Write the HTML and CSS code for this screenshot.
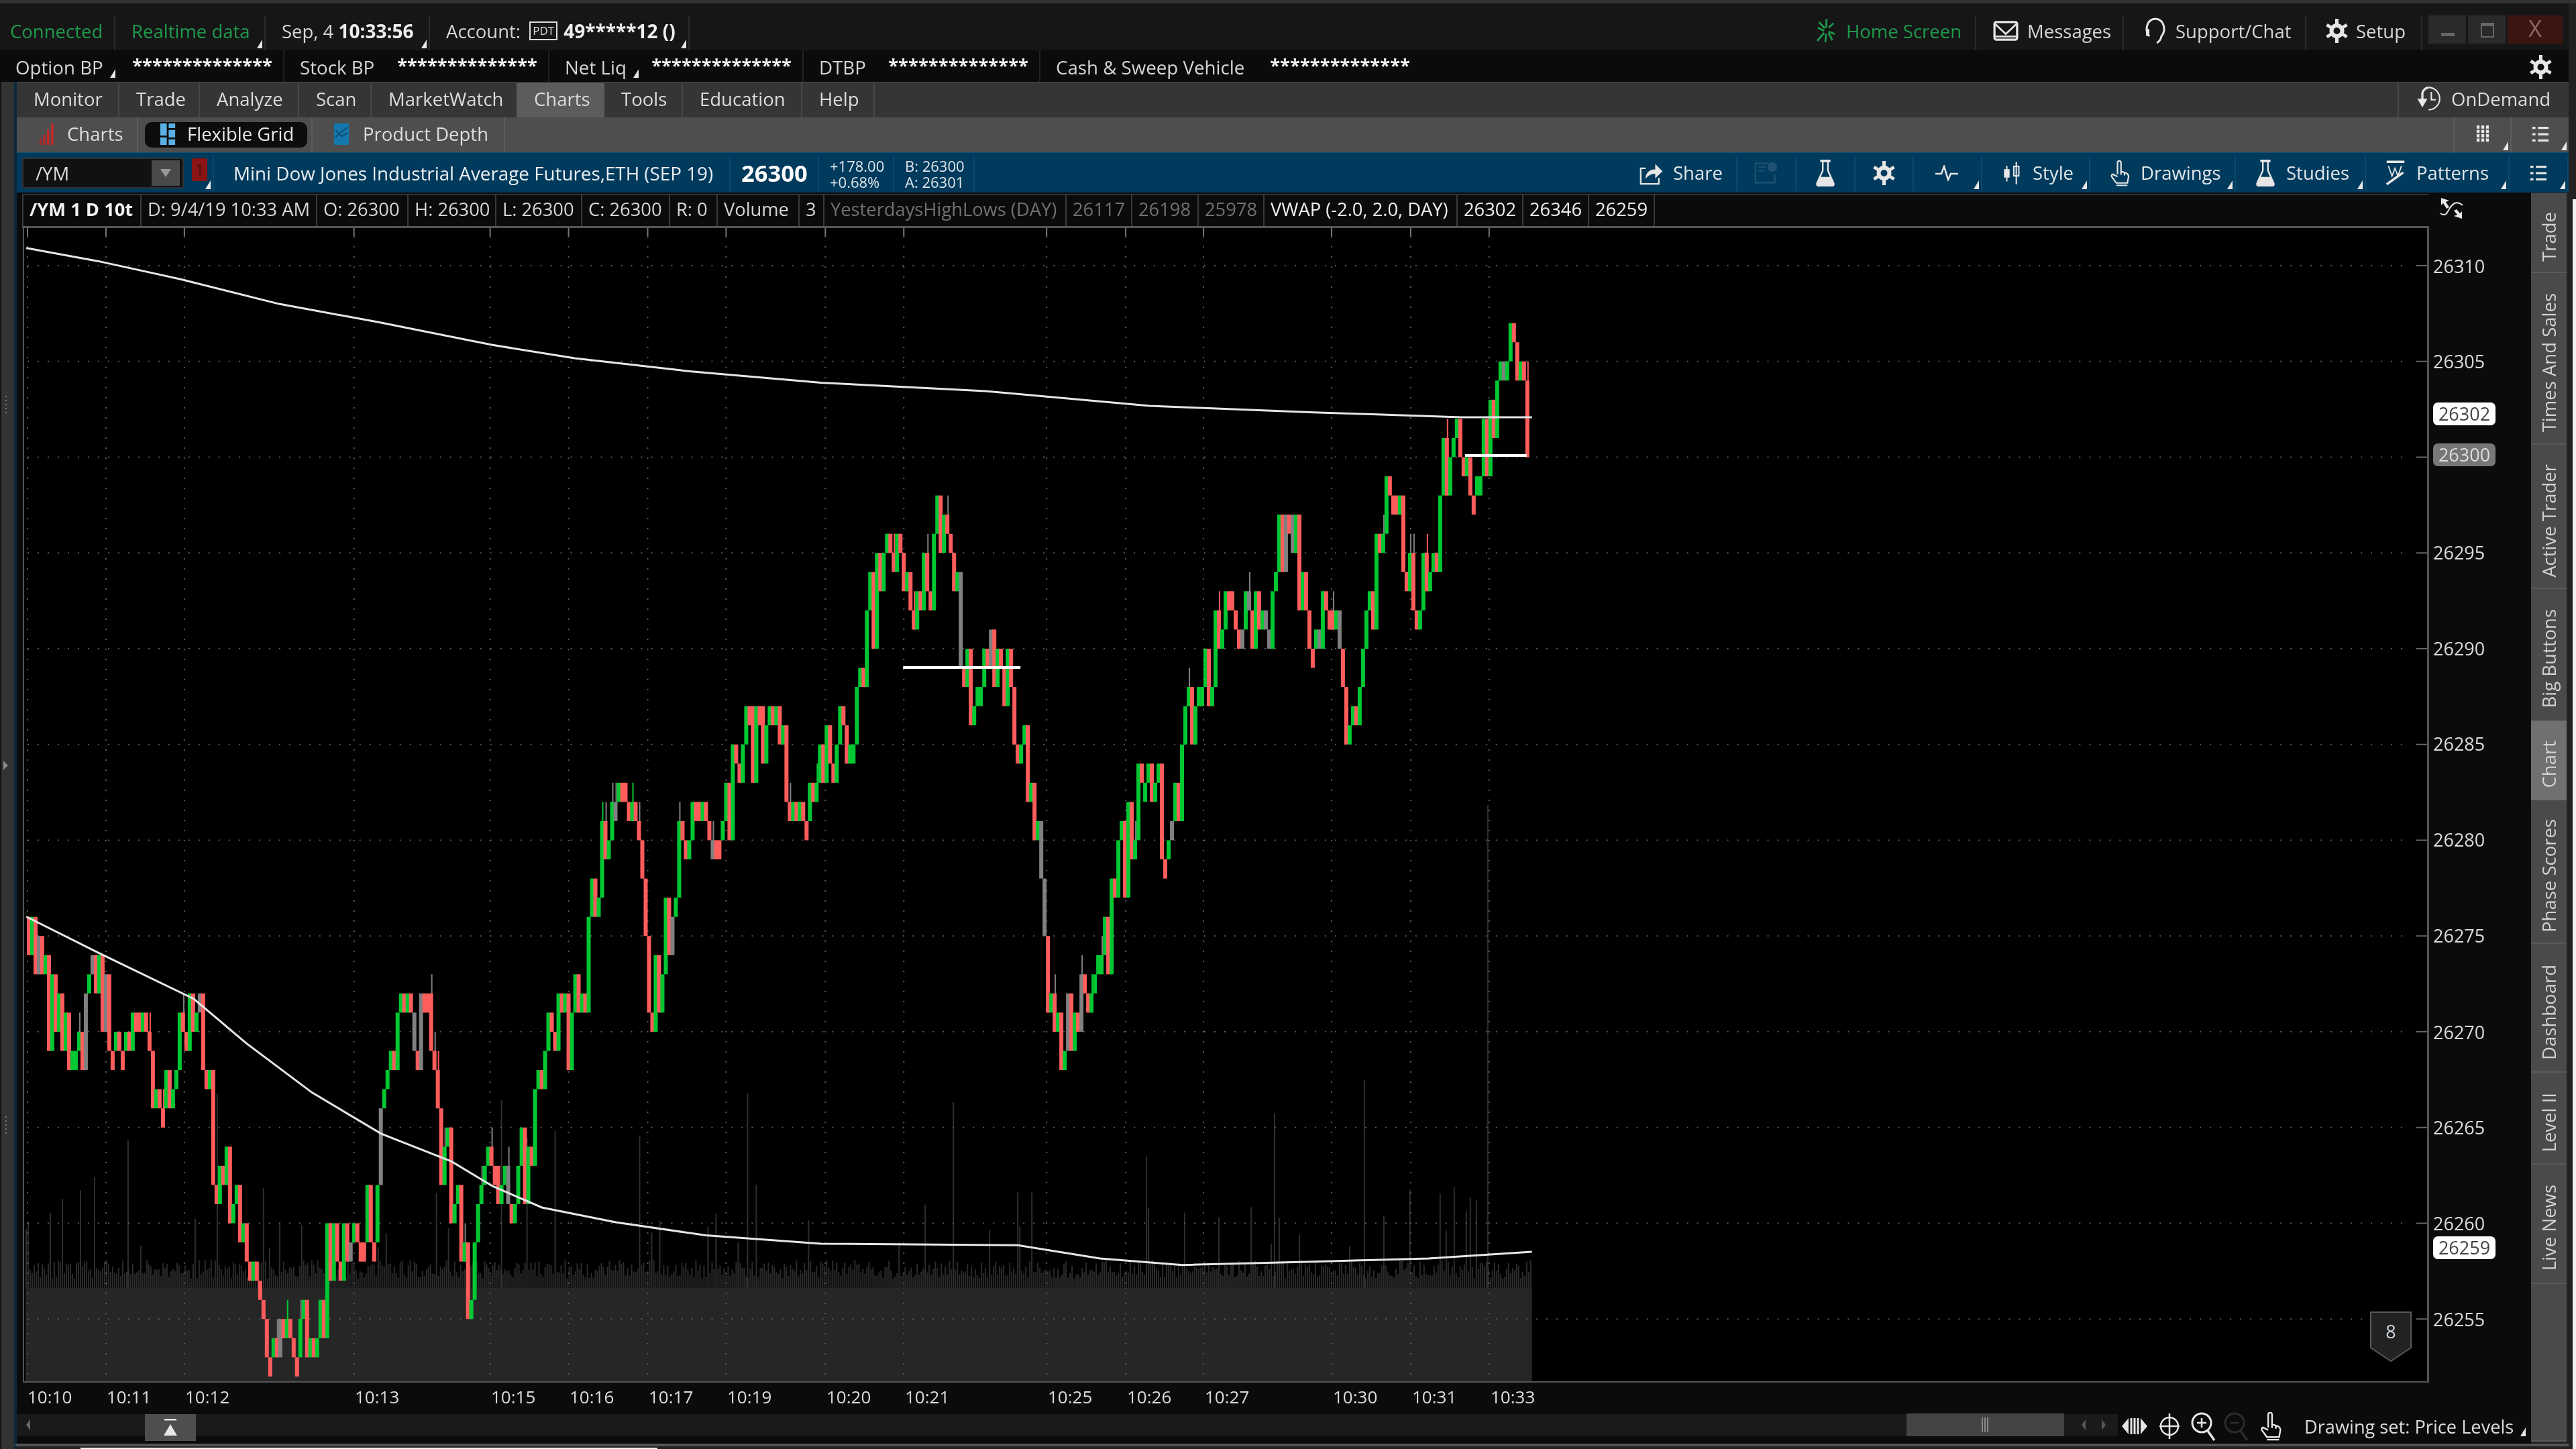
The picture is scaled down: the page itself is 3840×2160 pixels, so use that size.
FILE: index.html
```html
<!DOCTYPE html>
<html lang="en">
<head>
    <meta charset="UTF-8">
    <title>thinkorswim - Charts</title>
    <link rel="stylesheet" href="styles.css">
</head>
<body>

    <svg class="sprite" xmlns="http://www.w3.org/2000/svg">
        <symbol id="i-gear" viewBox="0 0 32 36"><circle cx="16" cy="18" r="8" fill="none" stroke="currentColor" stroke-width="6"/><path d="M16 0v9M16 27v9M1 9l8 5M23 22l8 5M31 9l-8 5M9 22l-8 5" stroke="currentColor" stroke-width="5" fill="none"/></symbol>
        <symbol id="i-home" viewBox="0 0 32 38"><path d="M17 0l-1 14M16 24l-1 13M2 35l11-13M20 14l8-7M3 14l10 5M20 20l10 4M5 5l9 10M20 22l6 12" stroke="currentColor" stroke-width="3" fill="none"/></symbol>
        <symbol id="i-mail" viewBox="0 0 40 32"><rect x="2" y="2" width="36" height="28" rx="3" fill="none" stroke="currentColor" stroke-width="3.5"/><path d="M3 5l17 16L37 5M3 25h34" fill="none" stroke="currentColor" stroke-width="3"/></symbol>
        <symbol id="i-headset" viewBox="0 0 36 40"><path d="M9 28C2 20 4 3 18 2c14 1 16 18 9 26-1 5-3 8-7 10" fill="none" stroke="currentColor" stroke-width="3"/><rect x="4" y="17" width="5" height="11" rx="2" fill="currentColor"/></symbol>
        <symbol id="i-flask" viewBox="0 0 30 42"><path d="M7 2h16" stroke="currentColor" stroke-width="4"/><path d="M11 3v14L2 37q-1 4 3 4h20q4 0 3-4l-9-20V3" fill="none" stroke="currentColor" stroke-width="2.5"/><path d="M7 27h16l5 10q1 4-3 4H5q-4 0-3-4z" fill="currentColor"/></symbol>
        <symbol id="i-pulse" viewBox="0 0 36 24"><path d="M0 13h9l4-11 6 20 4-9h11" fill="none" stroke="currentColor" stroke-width="2.5"/></symbol>
        <symbol id="i-candle" viewBox="0 0 36 42"><path d="M9 8v28M26 1v40" stroke="currentColor" stroke-width="2.5"/><rect x="4" y="14" width="10" height="15" fill="currentColor"/><rect x="21.5" y="9" width="9" height="17" fill="none" stroke="currentColor" stroke-width="2.5"/></symbol>
        <symbol id="i-hand" viewBox="0 0 34 46"><path d="M13 25V5a3 3 0 0 1 6 0v15l9 3q4 2 4 6l-2 11H11L3 29q-1-3 2-4l8 4M19 20v6M25 22v5M11 44h19" fill="none" stroke="currentColor" stroke-width="2.5"/></symbol>
        <symbol id="i-patterns" viewBox="0 0 34 42"><rect x="2" y="0" width="30" height="4" fill="currentColor"/><path d="M5 9l6 17 5-13 5 13 6-17" fill="none" stroke="currentColor" stroke-width="2"/><path d="M2 40l28-20" stroke="currentColor" stroke-width="4"/></symbol>
        <symbol id="i-list" viewBox="0 0 28 28"><path d="M1 4h5M10 4h17M1 14h5M10 14h17M1 24h5M10 24h17" stroke="currentColor" stroke-width="3.5"/></symbol>
        <symbol id="i-grid" viewBox="0 0 24 30"><path d="M4 0v30M12 0v30M20 0v30" stroke="currentColor" stroke-width="5" stroke-dasharray="5.5 2"/></symbol>
        <symbol id="i-ondemand" viewBox="0 0 46 48"><path d="M22 4a20 20 0 1 1 0 40" fill="none" stroke="currentColor" stroke-width="2.5"/><path d="M2 24h18l-9 16z" fill="currentColor"/><path d="M11 26V14q2-8 11-10" fill="none" stroke="currentColor" stroke-width="4"/><path d="M27 12v14h8" fill="none" stroke="currentColor" stroke-width="2.5"/></symbol>
        <symbol id="i-share" viewBox="0 0 40 40"><path d="M10 12H2v26h30V28" fill="none" stroke="currentColor" stroke-width="2.5"/><path d="M10 30c0-11 7-16 16-16V5l12 12-12 12v-8c-7 0-12 3-16 9z" fill="currentColor"/></symbol>
        <symbol id="i-news" viewBox="0 0 40 40"><path d="M24 4H2v32h32V22" fill="none" stroke="currentColor" stroke-width="2.5"/><circle cx="30" cy="10" r="8" fill="currentColor"/><path d="M7 10h12M7 16h10" stroke="currentColor" stroke-width="2.5"/></symbol>
        <symbol id="i-bars" viewBox="0 0 32 46"><rect x="0" y="32" width="5" height="14" fill="#a52a2a"/><rect x="8" y="24" width="5" height="22" fill="#b52a2a"/><rect x="16" y="14" width="5" height="32" fill="#c52a2a"/><rect x="25" y="0" width="5" height="46" fill="#c82a2a"/></symbol>
        <symbol id="i-flex" viewBox="0 0 32 46"><rect x="0" y="0" width="14" height="26" fill="#58b0e4"/><rect x="18" y="0" width="14" height="10" fill="#58b0e4"/><rect x="18" y="14" width="14" height="16" fill="#58b0e4"/><rect x="0" y="30" width="14" height="16" fill="#58b0e4"/><rect x="18" y="34" width="14" height="12" fill="#58b0e4"/></symbol>
        <symbol id="i-depth" viewBox="0 0 32 46"><rect x="0" y="0" width="32" height="46" rx="2" fill="#1477ad"/><path d="M3 14l8 8 8-6 10-8M3 30l8-8 6 6 12-8" fill="none" stroke="#0c4f78" stroke-width="3"/></symbol>
        <symbol id="i-swap" viewBox="0 0 38 36"><path d="M3 25c8 6 10-2 14-8s10-12 19-4" fill="none" stroke="currentColor" stroke-width="2"/><path d="M4 2l12 4-5 2 5 8-4 2-5-8-3 3zM35 33l-12-4 5-2-5-6 4-2 5 6 3-3z" fill="currentColor"/></symbol>
        <symbol id="i-pan" viewBox="0 0 38 26"><path d="M0 13L10 1v24zM38 13L28 1v24z" fill="currentColor"/><path d="M14 1v24M19 1v24M24 1v24" stroke="currentColor" stroke-width="3"/></symbol>
        <symbol id="i-cross" viewBox="0 0 32 40"><circle cx="16" cy="20" r="13" fill="none" stroke="currentColor" stroke-width="2.5"/><path d="M16 1v38M1 20h30" stroke="currentColor" stroke-width="2.5"/></symbol>
        <symbol id="i-zoomin" viewBox="0 0 38 44"><circle cx="16" cy="17" r="14" fill="none" stroke="currentColor" stroke-width="3"/><path d="M16 10v14M9 17h14" stroke="currentColor" stroke-width="2.5"/><path d="M25 29l10 14" stroke="currentColor" stroke-width="3.5"/></symbol>
        <symbol id="i-zoomout" viewBox="0 0 38 44"><circle cx="16" cy="17" r="14" fill="none" stroke="currentColor" stroke-width="3"/><path d="M9 17h14" stroke="currentColor" stroke-width="2.5"/><path d="M25 29l10 14" stroke="currentColor" stroke-width="3.5"/></symbol>
        <symbol id="i-collapse" viewBox="0 0 22 26"><path d="M2 1h18" stroke="currentColor" stroke-width="3"/><path d="M11 8l10 17H1z" fill="currentColor"/></symbol>
        <symbol id="i-badge" viewBox="0 0 62 76"><path d="M1 1h60v53L31 74 1 54z" fill="#222" stroke="#585858" stroke-width="2"/></symbol>
    </svg>

    <div class="app">

        <div class="status-row">
            <div class="cell green">Connected</div>
            <div class="cell green has-menu">Realtime data</div>
            <div class="cell has-menu">Sep, 4 <b class="clock">10:33:56</b></div>
            <div class="cell has-menu">Account: <span class="pdt">PDT</span> <b class="acct">49*****12 ()</b></div>
            <div class="spacer"></div>
            <div class="cell end green home-cell"><svg class="ico ico-home"><use href="#i-home"/></svg>Home Screen</div>
            <div class="cell end msg-cell"><svg class="ico ico-mail"><use href="#i-mail"/></svg>Messages</div>
            <div class="cell end"><svg class="ico ico-head"><use href="#i-headset"/></svg>Support/Chat</div>
            <div class="cell end"><svg class="ico ico-gear"><use href="#i-gear"/></svg>Setup</div>
            <div class="win-buttons">
                <div class="win-btn"><span class="win-min"></span></div>
                <div class="win-btn"><span class="win-max"></span></div>
                <div class="win-btn win-close">X</div>
            </div>
        </div>

        <div class="account-row">
            <div class="acct-cell"><span class="has-menu acct-label">Option BP</span><b class="stars">**************</b></div>
            <div class="acct-cell"><span>Stock BP</span><b class="stars">**************</b></div>
            <div class="acct-cell"><span class="has-menu acct-label">Net Liq</span><b class="stars">**************</b></div>
            <div class="acct-cell"><span>DTBP</span><b class="stars">**************</b></div>
            <div class="acct-cell acct-last"><span>Cash &amp; Sweep Vehicle</span><b class="stars">**************</b></div>
            <div class="spacer"></div>
            <svg class="ico ico-gear acct-gear"><use href="#i-gear"/></svg>
        </div>

        <div class="workspace">
            <div class="left-strip">
                <span class="grip"></span>
                <span class="strip-arrow"></span>
                <span class="grip"></span>
            </div>

            <div class="main">
                <div class="menu-row">
                    <div class="tab">Monitor</div>
                    <div class="tab">Trade</div>
                    <div class="tab">Analyze</div>
                    <div class="tab">Scan</div>
                    <div class="tab">MarketWatch</div>
                    <div class="tab active">Charts</div>
                    <div class="tab">Tools</div>
                    <div class="tab">Education</div>
                    <div class="tab">Help</div>
                    <div class="spacer"></div>
                    <div class="tab ondemand"><svg class="ico ico-ondemand"><use href="#i-ondemand"/></svg>OnDemand</div>
                </div>

                <div class="sub-row">
                    <div class="sub-tab"><svg class="ico ico-sub"><use href="#i-bars"/></svg>Charts</div>
                    <div class="sub-tab"><div class="pill"><svg class="ico ico-sub"><use href="#i-flex"/></svg>Flexible Grid</div></div>
                    <div class="sub-tab"><svg class="ico ico-sub"><use href="#i-depth"/></svg>Product Depth</div>
                    <div class="spacer"></div>
                    <div class="sub-tab icon-only has-menu"><svg class="ico ico-grid"><use href="#i-grid"/></svg></div>
                    <div class="sub-tab icon-only has-menu"><svg class="ico ico-list"><use href="#i-list"/></svg></div>
                </div>

                <div class="toolbar">
                    <div class="tool symbol-box has-menu">
                        <div class="symbol-input"><span>/YM</span><span class="symbol-drop"></span></div>
                        <div class="link-badge">1</div>
                    </div>
                    <div class="tool title">Mini Dow Jones Industrial Average Futures,ETH (SEP 19)</div>
                    <div class="tool last-price">26300</div>
                    <div class="tool small-pair"><span>+178.00</span><span>+0.68%</span></div>
                    <div class="tool small-pair"><span>B: 26300</span><span>A: 26301</span></div>
                    <div class="spacer"></div>
                    <div class="tool share-tool"><svg class="ico ico-share"><use href="#i-share"/></svg>Share</div>
                    <div class="tool centered dimmed"><svg class="ico ico-share"><use href="#i-news"/></svg></div>
                    <div class="tool centered"><svg class="ico ico-flask"><use href="#i-flask"/></svg></div>
                    <div class="tool centered"><svg class="ico ico-gear"><use href="#i-gear"/></svg></div>
                    <div class="tool centered has-menu"><svg class="ico ico-pulse"><use href="#i-pulse"/></svg></div>
                    <div class="tool has-menu"><svg class="ico ico-flask"><use href="#i-candle"/></svg>Style</div>
                    <div class="tool has-menu"><svg class="ico ico-flask"><use href="#i-hand"/></svg>Drawings</div>
                    <div class="tool has-menu"><svg class="ico ico-flask"><use href="#i-flask"/></svg>Studies</div>
                    <div class="tool has-menu"><svg class="ico ico-flask"><use href="#i-patterns"/></svg>Patterns</div>
                    <div class="tool centered has-menu"><svg class="ico ico-list"><use href="#i-list"/></svg></div>
                </div>

                <div class="chart-body">
                    <div class="chart-pane">
                        <div class="legend">
                            <div class="lg strong">/YM 1 D 10t</div>
                            <div class="lg">D: 9/4/19 10:33 AM</div>
                            <div class="lg">O: 26300</div>
                            <div class="lg">H: 26300</div>
                            <div class="lg">L: 26300</div>
                            <div class="lg">C: 26300</div>
                            <div class="lg">R: 0</div>
                            <div class="lg">Volume</div>
                            <div class="lg">3</div>
                            <div class="lg muted">YesterdaysHighLows (DAY)</div>
                            <div class="lg muted">26117</div>
                            <div class="lg muted">26198</div>
                            <div class="lg muted">25978</div>
                            <div class="lg bright">VWAP (-2.0, 2.0, DAY)</div>
                            <div class="lg bright">26302</div>
                            <div class="lg bright">26346</div>
                            <div class="lg bright">26259</div>
                        </div>
                        <div class="axis-head"><svg class="ico ico-swap"><use href="#i-swap"/></svg></div>

                        <div class="plot">
                            <svg id="chart" class="plot-svg" viewBox="36 340 3584 1719" preserveAspectRatio="none"></svg>
                            <div class="badge"><svg class="badge-shape"><use href="#i-badge"/></svg><span>8</span></div>
                        </div>

                        <div class="price-axis">
                            <span class="price" style="top:57px">26310</span>
                            <span class="price" style="top:199px">26305</span>
                            <span class="price" style="top:484px">26295</span>
                            <span class="price" style="top:627px">26290</span>
                            <span class="price" style="top:769px">26285</span>
                            <span class="price" style="top:912px">26280</span>
                            <span class="price" style="top:1055px">26275</span>
                            <span class="price" style="top:1199px">26270</span>
                            <span class="price" style="top:1341px">26265</span>
                            <span class="price" style="top:1484px">26260</span>
                            <span class="price" style="top:1627px">26255</span>
                            <span class="price-tag white" style="top:277px">26302</span>
                            <span class="price-tag grey" style="top:338px">26300</span>
                            <span class="price-tag white" style="top:1520px">26259</span>
                        </div>

                        <div class="time-axis">
                            <span class="time" style="left:7px">10:10</span>
                            <span class="time" style="left:125px">10:11</span>
                            <span class="time" style="left:242px">10:12</span>
                            <span class="time" style="left:495px">10:13</span>
                            <span class="time" style="left:698px">10:15</span>
                            <span class="time" style="left:815px">10:16</span>
                            <span class="time" style="left:933px">10:17</span>
                            <span class="time" style="left:1050px">10:19</span>
                            <span class="time" style="left:1198px">10:20</span>
                            <span class="time" style="left:1315px">10:21</span>
                            <span class="time" style="left:1528px">10:25</span>
                            <span class="time" style="left:1646px">10:26</span>
                            <span class="time" style="left:1762px">10:27</span>
                            <span class="time" style="left:1953px">10:30</span>
                            <span class="time" style="left:2071px">10:31</span>
                            <span class="time" style="left:2188px">10:33</span>
                        </div>
                        <div class="axis-foot"></div>

                        <div class="scroll-row">
                            <div class="track">
                                <span class="arrow-left"></span>
                                <div class="collapse-btn"><svg class="ico ico-collapse"><use href="#i-collapse"/></svg></div>
                                <div class="spacer"></div>
                                <div class="thumb"><span class="thumb-grip"></span></div>
                                <span class="arrow-left dim"></span>
                                <span class="arrow-right dim"></span>
                            </div>
                            <div class="chart-tools has-menu">
                                <svg class="ico ico-pan"><use href="#i-pan"/></svg>
                                <svg class="ico ico-cross"><use href="#i-cross"/></svg>
                                <svg class="ico ico-zoom"><use href="#i-zoomin"/></svg>
                                <svg class="ico ico-zoom off"><use href="#i-zoomout"/></svg>
                                <svg class="ico ico-hand"><use href="#i-hand"/></svg>
                                <span class="drawing-set">Drawing set: Price Levels</span>
                            </div>
                        </div>
                    </div>

                    <div class="side-tabs">
                        <div class="side-tab"><span>Trade</span></div>
                        <div class="side-tab"><span>Times And Sales</span></div>
                        <div class="side-tab"><span>Active Trader</span></div>
                        <div class="side-tab"><span>Big Buttons</span></div>
                        <div class="side-tab active"><span>Chart</span></div>
                        <div class="side-tab"><span>Phase Scores</span></div>
                        <div class="side-tab"><span>Dashboard</span></div>
                        <div class="side-tab"><span>Level II</span></div>
                        <div class="side-tab"><span>Live News</span></div>
                        <div class="side-tab"></div>
                    </div>
                </div>

                <div class="bottom-line"></div>
            </div>
        </div>

        <div class="peek"></div>
        <div class="peek-bottom"></div>
    </div>

    <script src="chart.js"></script>
</body>
</html>
```

FILE: styles.css
```css
* {
    box-sizing: border-box;
}

body {
    margin: 0;
    background: #222;
    font-family: "Open Sans", "Liberation Sans", sans-serif;
    font-size: 27.5px;
    color: #d6d6d6;
}

.sprite {
    display: none;
}

.app {
    position: relative;
    width: 3840px;
    height: 2160px;
    overflow: hidden;
    background: #222;
    border-top: 5px solid #333;
    filter: blur(.5px);
}

.spacer {
    flex: 1;
}

.ico {
    display: block;
    flex: none;
    color: #e6e6e6;
}

.has-menu {
    position: relative;
}

    .has-menu::after {
        content: "";
        position: absolute;
        right: 3px;
        bottom: 3px;
        border-style: solid;
        border-width: 0 0 13px 8px;
        border-color: transparent transparent #e8e8e8 transparent;
    }

/* top status bar */
.status-row {
    display: grid;
    grid-template-columns: 172px 224px 245px 387px 1fr 268px 220px 272px 173px 218px;
    width: 3829px;
    height: 70px;
    background: #161616;
}

.cell {
    display: flex;
    align-items: center;
    padding: 0 0 6px 24px;
    margin-top: 18px;
    border-right: 2px solid #2a2a2a;
    white-space: pre;
}

    .cell:first-child {
        padding-left: 15px;
    }

    .cell.end {
        gap: 12px;
        padding-left: 29px;
    }

    .cell.home-cell {
        gap: 15px;
    }

    .cell.msg-cell {
        padding-left: 24px;
    }

    .cell.green {
        color: #1f9a4c;
    }

    .cell.green .ico {
        color: #1f9a4c;
    }

.clock, .acct {
    font-weight: 700;
    color: #eee;
    font-size: 28px;
}

.pdt {
    margin: 0 9px 0 6px;
    padding: 0 3px;
    border: 2px solid #ddd;
    font-size: 17px;
    line-height: 24px;
    color: #ddd;
}

.ico-home { width: 30px; height: 36px; }
.ico-mail { width: 40px; height: 30px; }
.ico-head { width: 36px; height: 40px; }
.ico-gear { width: 33px; height: 36px; }

.win-buttons {
    display: flex;
    gap: 3px;
    padding: 18px 0 10px 9px;
}

.win-btn {
    position: relative;
    width: 56px;
    background: #2a2a2a;
}

.win-min {
    position: absolute;
    left: 19px;
    bottom: 11px;
    width: 20px;
    height: 5px;
    background: #666;
}

.win-max {
    position: absolute;
    left: 19px;
    top: 11px;
    width: 20px;
    height: 22px;
    border: 2px solid #666;
    border-top-width: 5px;
}

.win-close {
    width: 82px;
    background: #3c1512;
    color: #8a6a66;
    text-align: center;
    font-size: 34px;
    line-height: 38px;
}

/* account values row */
.account-row {
    display: grid;
    grid-template-columns: 424px 395px 379px 353px 567px 1fr 56px;
    align-items: center;
    width: 3829px;
    height: 47px;
    background: #0b0b0b;
    font-size: 27.7px;
}

.acct-cell {
    display: flex;
    align-items: center;
    justify-content: space-between;
    height: 47px;
    padding: 3px 16px 0 23px;
    border-right: 2px solid #222;
}

.acct-last {
    border-right: none;
}

.acct-label {
    padding-right: 10px;
}

    .acct-label::after {
        right: -8px;
    }

.stars {
    font-size: 27.2px;
    line-height: 20px;
    letter-spacing: .1px;
    color: #f2f2f2;
    margin-top: -7px;
}

.acct-gear {
    margin-top: 2px;
    margin-left: -2px;
}

.workspace {
    display: flex;
    height: 2038px;
}

.left-strip {
    display: flex;
    flex-direction: column;
    align-items: center;
    justify-content: space-between;
    flex: none;
    width: 25px;
    padding: 468px 8px 468px 2px;
    background: #333;
    border-left: 2px solid #111;
    border-right: 4px solid #0b2a3c;
}

.grip {
    width: 2px;
    height: 28px;
    background: repeating-linear-gradient(#777 0 2px, transparent 2px 6px);
}

.strip-arrow {
    border-style: solid;
    border-width: 7px 0 7px 7px;
    border-color: transparent transparent transparent #888;
}

.main {
    display: flex;
    flex-direction: column;
    flex: none;
    width: 3804px;
}

/* main menu */
.menu-row {
    display: grid;
    grid-template-columns: 153px 120px 148px 108px 217px 130px 117px 178px 108px 1fr 255px;
    height: 53px;
    background: #353535;
    border-top: 2px solid #3f3f3f;
}

.tab {
    display: flex;
    align-items: center;
    padding: 0 0 5px 25px;
    border-right: 2px solid #484848;
    color: #dcdcdc;
    font-size: 27.5px;
}

    .tab.active {
        background: #5c5c5c;
        border-right-color: #5c5c5c;
    }

.ondemand {
    gap: 10px;
    border-right: none;
    border-left: 2px solid #484848;
    padding-left: 22px;
}

.ico-ondemand {
    width: 46px;
    height: 40px;
}

/* sub tabs */
.sub-row {
    display: grid;
    grid-template-columns: 181px 260px 287px 1fr 85px 87px;
    height: 52px;
    background: #4e4e4e;
}

.sub-tab {
    display: flex;
    align-items: center;
    gap: 14px;
    padding: 0 0 3px 29px;
    border-right: 2px solid #5c5c5c;
    color: #dedede;
}

    .sub-tab:nth-child(2) {
        padding-left: 10px;
        padding-bottom: 0;
    }

    .sub-tab:nth-child(3) {
        padding-left: 27px;
        gap: 16px;
    }

.pill {
    display: flex;
    align-items: center;
    gap: 13px;
    width: 242px;
    height: 38px;
    padding: 0 0 3px 18px;
    background: #0c0c0c;
    border-radius: 10px;
    color: #e8e8e8;
}

.ico-sub {
    width: 32px;
    height: 32px;
}

.icon-only {
    justify-content: center;
    padding-left: 0;
    border-left: 2px solid #5c5c5c;
    border-right: none;
}

.ico-grid {
    width: 24px;
    height: 26px;
}

.ico-list {
    width: 26px;
    height: 26px;
}

/* blue symbol toolbar */
.toolbar {
    display: grid;
    grid-template-columns: 294px 770px 132px 112px 120px 1fr 169px 88px 88px 87px 102px 161px 217px 194px 214px 88px;
    height: 60px;
    background: #003a5c;
    border-top: 1px solid #12506f;
}

.tool {
    display: flex;
    align-items: center;
    gap: 16px;
    padding: 0 0 3px 29px;
    margin: 5px 0 2px;
    border-right: 2px solid #0a4a6e;
    color: #dfe6ea;
}

.share-tool {
    gap: 14px;
    padding-left: 23px;
}

.symbol-box {
    gap: 12px;
    padding: 0 0 0 8px;
    margin-top: 3px;
}

.symbol-input {
    display: flex;
    align-items: center;
    justify-content: space-between;
    width: 241px;
    height: 46px;
    padding: 2px 4px 2px 18px;
    background: #111;
    border: 2px solid #333;
    border-radius: 4px;
    color: #ddd;
}

.symbol-drop {
    position: relative;
    width: 42px;
    height: 38px;
    background: #4a4a4a;
}

    .symbol-drop::after {
        content: "";
        position: absolute;
        left: 13px;
        top: 13px;
        border-style: solid;
        border-width: 12px 8px 0 8px;
        border-color: #999 transparent transparent transparent;
    }

.link-badge {
    width: 23px;
    height: 34px;
    margin-top: -10px;
    background: #8a1414;
    border-radius: 3px;
    color: #4f0d0d;
    font-size: 24px;
    line-height: 34px;
    text-align: center;
}

.title {
    padding-left: 29px;
    font-size: 27.8px;
    white-space: nowrap;
    color: #e8eef2;
}

.last-price {
    padding-left: 16px;
    font-size: 34.5px;
    font-weight: 700;
    color: #fff;
}

.small-pair {
    flex-direction: column;
    align-items: flex-start;
    justify-content: center;
    gap: 0;
    padding: 0 0 0 16px;
    font-size: 22px;
    line-height: 24px;
}

.centered {
    justify-content: center;
    padding-left: 0;
}

.dimmed .ico {
    color: #1f5272;
}

.ico-share { width: 36px; height: 36px; }
.ico-flask { width: 30px; height: 40px; }
.ico-pulse { width: 36px; height: 24px; }

/* chart */
.chart-body {
    display: flex;
    flex: none;
    height: 1865px;
}

.chart-pane {
    display: grid;
    grid-template-columns: 1fr 152px;
    grid-template-rows: 53px 1721px 47px 44px;
    flex: none;
    width: 3748px;
    padding-left: 9px;
    background: #0b0b0b;
}

.legend {
    display: grid;
    grid-template-columns: 178px 262px 136px 131px 128px 131px 71px 122px 37px 361px 98px 99px 98px 288px 98px 98px 98px;
    margin: 2px 0 0 -1px;
    height: 51px;
    border-top: 2px solid #333;
    border-bottom: 3px solid #555;
}

.lg {
    padding-left: 9px;
    border-right: 2px solid #3a3a3a;
    font-size: 27.3px;
    line-height: 42px;
    white-space: nowrap;
    color: #d6d6d6;
}

    .lg:first-child {
        border-left: 2px solid #3a3a3a;
    }

    .lg.strong {
        font-weight: 700;
        color: #f2f2f2;
    }

    .lg.muted {
        color: #717171;
    }

    .lg.bright {
        color: #f0f0f0;
    }

.axis-head {
    padding: 0 0 0 14px;
}

.ico-swap {
    width: 38px;
    height: 36px;
    margin-top: 6px;
}

.plot {
    position: relative;
    background: #000;
    border-left: 2px solid #555;
    border-right: 3px solid #555;
    border-bottom: 2px solid #555;
}

.plot-svg {
    display: block;
    width: 100%;
    height: 100%;
}

.badge {
    position: absolute;
    left: 3497px;
    top: 1615px;
    width: 62px;
    height: 76px;
    text-align: center;
    color: #cfd8e0;
    line-height: 60px;
    font-size: 27px;
}

    .badge span {
        position: relative;
    }

.badge-shape {
    position: absolute;
    left: 0;
    top: 0;
    width: 62px;
    height: 76px;
}

.price-axis {
    position: relative;
}

.price {
    position: absolute;
    left: 6px;
    transform: translateY(-50%);
    font-size: 27px;
    line-height: 30px;
    color: #dcdcdc;
}

.price-tag {
    position: absolute;
    left: 6px;
    width: 93px;
    height: 34px;
    transform: translateY(-50%);
    border-radius: 7px;
    font-size: 27px;
    line-height: 34px;
    text-align: center;
}

    .price-tag.white {
        background: #fff;
        color: #444;
    }

    .price-tag.grey {
        background: #777;
        color: #ddd;
    }

.time-axis {
    position: relative;
}

.time {
    position: absolute;
    top: 4px;
    font-size: 26px;
    line-height: 34px;
    color: #dcdcdc;
}

.scroll-row {
    display: flex;
    grid-column: 1 / span 2;
    margin-left: -9px;
}

.track {
    display: flex;
    align-items: center;
    flex: none;
    width: 3132px;
    height: 32px;
    padding-left: 14px;
    background: #1a1a1a;
}

.arrow-left {
    border-style: solid;
    border-width: 8px 6px 8px 0;
    border-color: transparent #666 transparent transparent;
}

.arrow-right {
    margin: 0 18px 0 24px;
    border-style: solid;
    border-width: 8px 0 8px 6px;
    border-color: transparent transparent transparent #666;
}

.dim {
    opacity: .8;
}

.collapse-btn {
    display: flex;
    align-items: center;
    justify-content: center;
    align-self: flex-start;
    width: 76px;
    height: 40px;
    margin-left: 171px;
    background: #4e4e4e;
}

.ico-collapse {
    width: 22px;
    height: 26px;
}

.thumb {
    display: flex;
    align-items: center;
    justify-content: center;
    width: 235px;
    height: 34px;
    margin-right: 26px;
    background: #444;
}

.thumb-grip {
    width: 11px;
    height: 22px;
    background: repeating-linear-gradient(90deg, #888 0 2px, transparent 2px 4px);
}

.chart-tools {
    display: flex;
    align-items: center;
    flex: none;
    width: 615px;
    height: 36px;
    padding-left: 6px;
}

    .chart-tools::after {
        right: 7px;
    }

.ico-pan { width: 38px; height: 28px; margin-right: 17px; }
.ico-cross { width: 32px; height: 40px; margin-right: 16px; }
.ico-zoom { width: 38px; height: 44px; margin-right: 11px; }
.ico-zoom.off { color: #2c2c2c; margin-right: 15px; }
.ico-hand { width: 34px; height: 44px; }

.drawing-set {
    margin-left: 33px;
    font-size: 27.2px;
    white-space: nowrap;
    color: #dcdcdc;
}

/* vertical tabs on the right */
.side-tabs {
    display: grid;
    grid-template-rows: 119px 256px 215px 197px 118px 214px 192px 137px 178px 1fr;
    flex: none;
    width: 53px;
    height: 1861px;
    margin-top: 1px;
    background: #4a4a4a;
}

.side-tab {
    display: flex;
    align-items: center;
    justify-content: center;
    padding-top: 13px;
    border-bottom: 2px solid #5a5a5a;
    color: #d2d2d2;
    background: #4a4a4a;
}

    .side-tab.active {
        background: #707070;
        border-bottom-color: #707070;
    }

    .side-tab span {
        writing-mode: vertical-rl;
        transform: rotate(180deg);
        font-size: 27.5px;
        line-height: 30px;
        white-space: nowrap;
    }

.bottom-line {
    height: 4px;
    margin-left: -2px;
    background: #555;
}

.peek {
    position: absolute;
    right: 0;
    top: 292px;
    width: 5px;
    bottom: 0;
    background: #f2f2f2;
}

.peek-bottom {
    position: absolute;
    left: 120px;
    bottom: 0;
    width: 860px;
    height: 2px;
    background: #f2f2f2;
}
```

FILE: chart.js
```js
// price chart, all coordinates are page pixels (viewBox matches the plot position)
const svg = document.getElementById('chart');
const NS = 'http://www.w3.org/2000/svg';
const SCALE = 3840 / 1568;
const PLOT_TOP = 340;
const PLOT_BOTTOM = 2059;
const TICK = 28.55;

// rough price path, read off the screen at 1568 wide
const pricePath = [[16,562],[22,590],[30,610],[40,655],[50,620],[57,575],[65,625],[75,640],[85,615],[95,680],
    [105,640],[118,600],[125,670],[135,720],[150,750],[160,800],[165,830],[178,800],[188,835],[195,790],
    [200,745],[215,760],[225,745],[235,660],[245,600],[258,615],[265,680],[275,720],[285,810],[295,690],
    [310,740],[322,700],[332,610],[345,650],[360,540],[378,480],[388,530],[396,625],[405,560],[420,490],
    [435,510],[450,465],[470,425],[480,480],[490,505],[505,440],[515,470],[530,370],[545,320],[555,390],
    [572,305],[585,390],[595,440],[605,385],[620,440],[630,520],[640,620],[645,650],[655,600],[670,590],
    [680,530],[695,465],[710,530],[722,435],[735,415],[750,360],[765,395],[785,305],[797,395],[812,365],
    [822,462],[835,350],[848,295],[862,390],[875,305],[890,255],[898,310],[912,220],[920,195],[925,240],[933,295]];

const vwapMid = [[16,151],[60,159],[110,170],[170,185],[230,196],[300,210],[350,218],[420,226],[500,233],
    [600,238],[700,247],[800,251],[890,254],[933,254]];

const vwapLow = [[16,558],[60,580],[118,608],[150,635],[190,665],[232,690],[275,707],[300,722],[330,735],
    [375,744],[430,752],[500,757],[620,758],[670,766],[720,770],[800,768],[870,766],[933,762]];

const timeTicks = [41, 158, 275, 528, 731, 848, 966, 1083, 1231, 1348, 1561, 1679, 1795, 1986, 2104, 2221];

let seed = 11;
function rnd() {
    seed = (seed * 16807) % 2147483647;
    return seed / 2147483647;
}

function add(tag, attrs) {
    const el = document.createElementNS(NS, tag);
    for (const key in attrs) {
        el.setAttribute(key, attrs[key]);
    }
    svg.appendChild(el);
    return el;
}

function rect(x, y, w, h, fill) {
    add('rect', { x: x, y: y, width: w, height: h, fill: fill });
}

function pathY(x) {
    const sx = x / SCALE;
    for (let i = 1; i < pricePath.length; i++) {
        if (sx <= pricePath[i][0]) {
            const a = pricePath[i - 1];
            const b = pricePath[i];
            return (a[1] + (b[1] - a[1]) * (sx - a[0]) / (b[0] - a[0])) * SCALE;
        }
    }
    return pricePath[pricePath.length - 1][1] * SCALE;
}

// highest and lowest points of the path close to x, candles stay between them
function pathBand(x) {
    let lo = Infinity;
    let hi = -Infinity;
    for (let d = -30; d <= 30; d += 6) {
        const y = pathY(Math.max(40, x + d));
        lo = Math.min(lo, y);
        hi = Math.max(hi, y);
    }
    return [lo, hi];
}

function snap(y) {
    return 396 + Math.round((y - 396) / TICK) * TICK;
}

function drawVolume() {
    rect(38, 1920, 2247, PLOT_BOTTOM - 1920, '#262626');
    for (let x = 38; x < 2285; x += 3) {
        const r = rnd();
        let h = 14 + rnd() * 28;
        if (r < 0.05) {
            h = 60 + rnd() * 90;
        } else if (r < 0.06) {
            h = 150 + rnd() * 140;
        }
        rect(x, 1920 - h, 2, h, h > 50 ? '#2e2e2e' : '#2b2b2b');
    }
    const tall = [[190, 1700], [323, 1630], [747, 1640], [1114, 1630], [1900, 1660], [2034, 1610], [2218, 1200]];
    tall.forEach(function (t) {
        rect(t[0], t[1], 2, 1920 - t[1], '#303030');
    });
}

function drawGrid() {
    for (let p = 26255; p <= 26310; p += 5) {
        const y = 396 + (26310 - p) * TICK;
        add('line', { x1: 41, y1: y, x2: 3590, y2: y, stroke: '#5c5c5c', 'stroke-width': 2, 'stroke-dasharray': '2 13' });
        add('line', { x1: 3604, y1: y, x2: 3620, y2: y, stroke: '#666', 'stroke-width': 2 });
    }
    timeTicks.forEach(function (x) {
        add('line', { x1: x, y1: 352, x2: x, y2: PLOT_BOTTOM, stroke: '#5c5c5c', 'stroke-width': 2, 'stroke-dasharray': '2 13' });
        add('line', { x1: x, y1: PLOT_TOP, x2: x, y2: 352, stroke: '#777', 'stroke-width': 2 });
    });
}

function drawCandles() {
    const green = '#00c832';
    const red = '#ff5c5c';
    const grey = '#808080';
    let prev = snap(pathY(40));
    for (let x = 40; x < 2280; x += 5) {
        const band = pathBand(x);
        let next = snap(pathY(x) + (rnd() - 0.5) * 150);
        next = Math.min(Math.max(next, snap(band[0])), snap(band[1]));
        if (next === prev) {
            next = prev + (rnd() < 0.5 ? TICK : -TICK);
            next = Math.min(Math.max(next, snap(band[0])), snap(band[1]));
        }
        const up = next < prev;
        const color = rnd() < 0.05 ? grey : (up ? green : red);
        const top = Math.min(prev, next);
        const height = Math.max(Math.abs(next - prev), TICK);
        const wick = rnd();
        if (wick < 0.1) {
            rect(x + 3, top - TICK, 2, height + TICK, wick < 0.06 ? grey : color);
        }
        rect(x, top, 6, height, color);
        prev = next;
    }
}

function drawLine(points) {
    const text = points.map(function (p) {
        return (p[0] * SCALE).toFixed(1) + ',' + (p[1] * SCALE).toFixed(1);
    }).join(' ');
    add('polyline', { points: text, fill: 'none', stroke: '#e6e6e6', 'stroke-width': 3 });
}

drawVolume();
drawGrid();
drawCandles();
drawLine(vwapMid);
drawLine(vwapLow);
rect(1347, 993, 175, 4, '#fff');
rect(2185, 677, 92, 4, '#fff');
```
